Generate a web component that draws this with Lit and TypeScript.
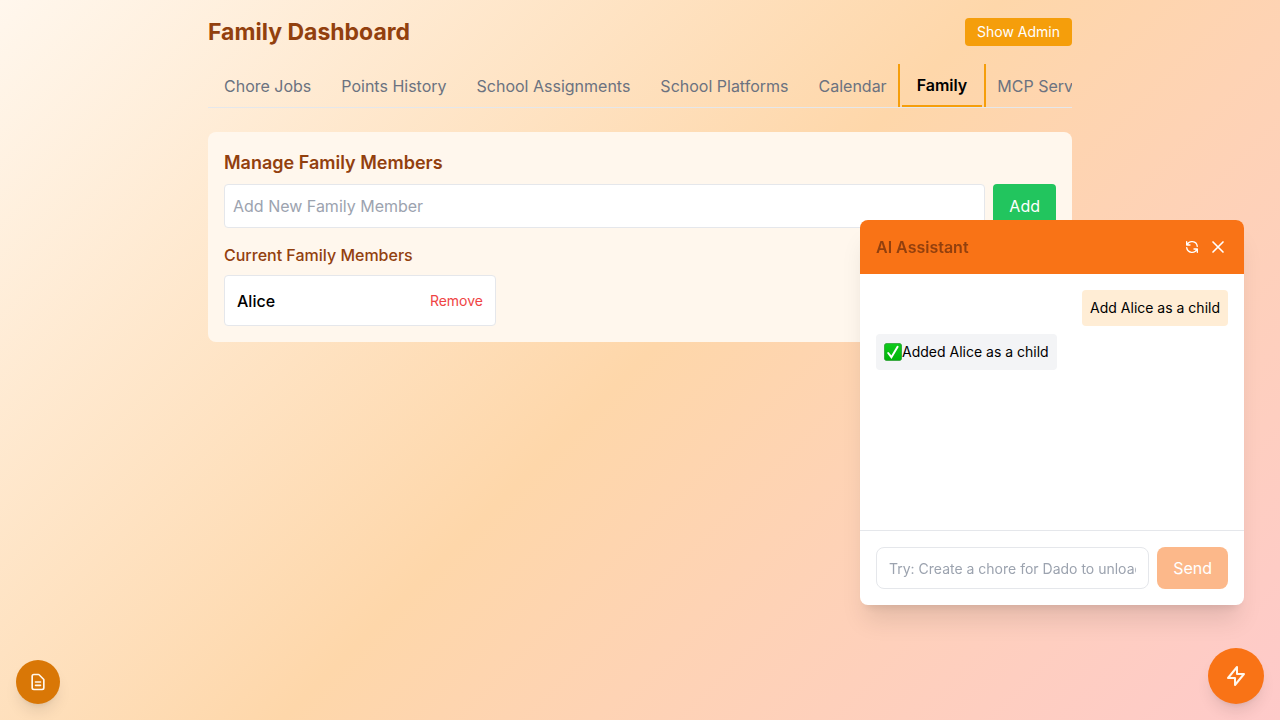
import { LitElement, html, css, svg } from "lit";
import { customElement, state } from "lit/decorators.js";

const TABS = [
  "Chore Jobs",
  "Points History",
  "School Assignments",
  "School Platforms",
  "Calendar",
  "Family",
  "MCP Services",
];

@customElement("app-root")
export class AppRoot extends LitElement {
  @state() private active = "Family";
  @state() private chatOpen = true;

  static styles = css`
    * {
      box-sizing: border-box;
    }
    :host {
      display: block;
      min-height: 100vh;
      font-family: "Inter Variable", Inter, "Noto Sans", sans-serif;
      font-size: 16px;
      line-height: 24px;
      color: #000;
      background: linear-gradient(135deg, #fff7ed 0%, #fed7aa 50%, #fecaca 100%);
    }
    h1, h2, h3, p, ul {
      margin: 0;
      padding: 0;
    }
    button, input {
      font: inherit;
      color: inherit;
      margin: 0;
    }
    button {
      border: 0;
      background: none;
      cursor: pointer;
    }
    input::placeholder {
      color: #9ca3af;
      opacity: 1;
    }
    main {
      max-width: 896px;
      margin: 0 auto;
      padding: 16px;
    }
    .top {
      display: flex;
      align-items: center;
      justify-content: space-between;
      margin-bottom: 16px;
    }
    h1 {
      font-size: 23px;
      line-height: 32px;
      font-weight: 700;
      color: #92400e;
    }
    .admin {
      padding: 4px 12px;
      border-radius: 4px;
      background: #f59e0b;
      color: #fff;
      font-size: 14px;
      line-height: 20px;
    }
    .tabs {
      display: flex;
      overflow: hidden;
      padding-left: 1px;
      border-bottom: 1px solid #e5e7eb;
      margin-bottom: 24px;
    }
    .tab {
      position: relative;
      flex: none;
      height: 43px;
      padding: 0 15px;
      color: #6b7280;
      white-space: nowrap;
    }
    .tab.active {
      color: #000;
      font-weight: 600;
      border-bottom: 2px solid #f59e0b;
    }
    .tab.active::before,
    .tab.active::after {
      content: "";
      position: absolute;
      top: 0;
      bottom: -2px;
      width: 2px;
      background: #f59e0b;
    }
    .tab.active::before {
      left: -4px;
    }
    .tab.active::after {
      right: -4px;
    }
    .card {
      padding: 16px;
      border-radius: 8px;
      background: #fff7ed;
    }
    h2 {
      font-size: 18px;
      line-height: 30px;
      font-weight: 600;
      color: #92400e;
      margin-bottom: 6px;
    }
    .add-row {
      display: flex;
      gap: 8px;
      margin-bottom: 15px;
    }
    .name {
      flex: 1;
      min-width: 0;
      height: 44px;
      padding: 8px;
      border: 1px solid #e5e7eb;
      border-radius: 4px;
      background: #fff;
    }
    .add {
      padding: 0 16px;
      border-radius: 4px;
      background: #22c55e;
      color: #fff;
    }
    h3 {
      font-size: 16px;
      line-height: 24px;
      font-weight: 500;
      color: #92400e;
    }
    .card h3 {
      margin-bottom: 8px;
    }
    .members {
      display: grid;
      grid-template-columns: repeat(3, 1fr);
      gap: 8px;
      list-style: none;
    }
    .member {
      display: flex;
      align-items: center;
      justify-content: space-between;
      min-height: 51px;
      padding: 12px;
      border: 1px solid #e5e7eb;
      border-radius: 4px;
      background: #fff;
      font-weight: 500;
    }
    .remove {
      padding: 0;
      color: #ef4444;
      font-size: 14px;
      font-weight: 400;
      line-height: 20px;
    }
    .chat {
      position: fixed;
      right: 36px;
      bottom: 115px;
      width: 384px;
      border-radius: 8px;
      overflow: hidden;
      background: #fff;
      box-shadow: 0 20px 25px -5px rgba(0, 0, 0, 0.1), 0 8px 10px -6px rgba(0, 0, 0, 0.1);
    }
    .chat-head {
      display: flex;
      align-items: center;
      justify-content: space-between;
      padding: 15px 16px;
      background: #f97316;
    }
    .chat-head h3 {
      font-weight: 600;
    }
    .tools {
      display: flex;
      align-items: center;
      gap: 8px;
      color: #fff;
    }
    .tools button {
      display: flex;
      padding: 0;
    }
    .log {
      display: flex;
      flex-direction: column;
      gap: 8px;
      height: 256px;
      padding: 16px;
      font-size: 14px;
      line-height: 20px;
      overflow-y: auto;
    }
    .msg {
      align-self: flex-start;
      padding: 8px;
      border-radius: 4px;
      background: #f3f4f6;
    }
    .msg.mine {
      align-self: flex-end;
      background: #ffedd5;
    }
    .msg.done {
      display: flex;
      align-items: center;
    }
    .compose {
      display: flex;
      gap: 8px;
      padding: 16px;
      border-top: 1px solid #e5e7eb;
    }
    .prompt {
      flex: 1;
      min-width: 0;
      height: 42px;
      padding: 8px 12px;
      border: 1px solid #e5e7eb;
      border-radius: 8px;
      background: #fff;
      font-size: 14px;
      line-height: 20px;
    }
    .send {
      padding: 0 16px;
      border-radius: 8px;
      background: #f97316;
      color: #fff;
      opacity: 0.5;
    }
    .fab {
      position: fixed;
      bottom: 16px;
      display: flex;
      align-items: center;
      justify-content: center;
      padding: 0;
      border-radius: 50%;
      color: #fff7ed;
      box-shadow: 0 10px 15px -3px rgba(0, 0, 0, 0.1), 0 4px 6px -4px rgba(0, 0, 0, 0.1);
    }
    .notes {
      left: 16px;
      width: 44px;
      height: 44px;
      background: #d97706;
    }
    .assist {
      right: 16px;
      width: 56px;
      height: 56px;
      background: #f97316;
    }
  `;

  private icon(size: number, width: number, body: unknown) {
    return html`<svg width=${size} height=${size} viewBox="0 0 24 24" fill="none" stroke="currentColor"
      stroke-width=${width} stroke-linecap="round" stroke-linejoin="round" aria-hidden="true">${body}</svg>`;
  }

  private renderChat() {
    return html`<section class="chat" aria-label="AI Assistant">
      <header class="chat-head">
        <h3>AI Assistant</h3>
        <div class="tools">
          <button aria-label="Reset conversation">
            ${this.icon(16, 2, svg`<path d="M4 4v5h.582m15.356 2A8.001 8.001 0 004.582 9m0 0H9m11 11v-5h-.581m0 0a8.003 8.003 0 01-15.357-2m15.357 2H15" />`)}
          </button>
          <button aria-label="Close" @click=${() => (this.chatOpen = false)}>
            ${this.icon(20, 2, svg`<path d="M6 18L18 6M6 6l12 12" />`)}
          </button>
        </div>
      </header>
      <div class="log">
        <p class="msg mine">Add Alice as a child</p>
        <p class="msg done">
          <svg width="18" height="18" viewBox="0 0 18 18" role="img" aria-label="Done">
            <defs>
              <linearGradient id="g" x1="0" y1="0" x2="0" y2="1">
                <stop offset="0" stop-color="#0fcb1c" />
                <stop offset="1" stop-color="#00b409" />
              </linearGradient>
            </defs>
            <rect x="0.4" y="0.4" width="17.2" height="17.2" rx="2.5" fill="url(#g)" stroke="#2a9a30" stroke-width="0.8" />
            <path d="M4.2 10l3.2 4.2L13.6 3.8" fill="none" stroke="#fff" stroke-width="2" stroke-linecap="round" />
          </svg>
          <span>Added Alice as a child</span>
        </p>
      </div>
      <form class="compose" @submit=${(e: Event) => e.preventDefault()}>
        <input class="prompt" aria-label="Message" placeholder="Try: Create a chore for Dado to unload the dishwasher" />
        <button class="send" disabled>Send</button>
      </form>
    </section>`;
  }

  render() {
    return html`
      <main>
        <header class="top">
          <h1>Family Dashboard</h1>
          <button class="admin">Show Admin</button>
        </header>
        <nav class="tabs">
          ${TABS.map(
            (t) => html`<button class="tab ${t === this.active ? "active" : ""}" @click=${() => (this.active = t)}>${t}</button>`
          )}
        </nav>
        <section class="card">
          <h2>Manage Family Members</h2>
          <form class="add-row" @submit=${(e: Event) => e.preventDefault()}>
            <input class="name" aria-label="Add New Family Member" placeholder="Add New Family Member" />
            <button class="add">Add</button>
          </form>
          <h3>Current Family Members</h3>
          <ul class="members">
            <li class="member"><span>Alice</span><button class="remove">Remove</button></li>
          </ul>
        </section>
      </main>
      ${this.chatOpen ? this.renderChat() : null}
      <button class="fab notes" aria-label="Notes">
        ${this.icon(20, 2, svg`<path d="M9 12h6m-6 4h6m2 5H7a2 2 0 01-2-2V5a2 2 0 012-2h5.586a1 1 0 01.707.293l5.414 5.414a1 1 0 01.293.707V19a2 2 0 01-2 2z" />`)}
      </button>
      <button class="fab assist" aria-label="Toggle assistant" @click=${() => (this.chatOpen = !this.chatOpen)}>
        ${this.icon(24, 2, svg`<path d="M13 10V3L4 14h7v7l9-11h-7z" />`)}
      </button>
    `;
  }
}
